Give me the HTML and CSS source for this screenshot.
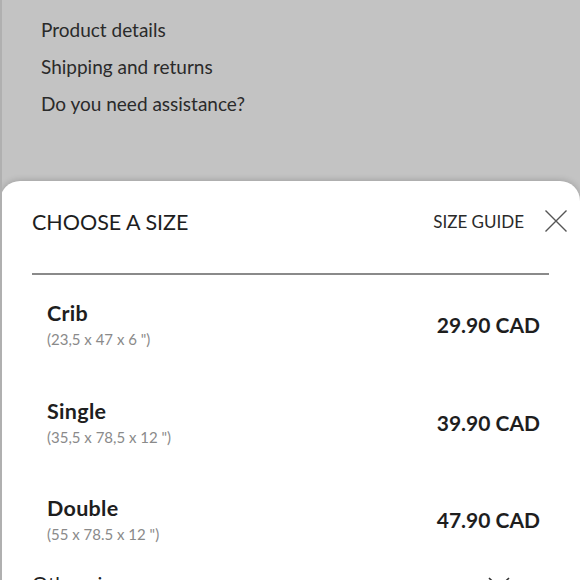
FILE: index.html
```html
<!DOCTYPE html>
<html>
<head>
<meta charset="utf-8">
<link rel="stylesheet" href="styles.css">
</head>
<body>
<div class="screen">
  <ul class="links">
    <li>Product details</li>
    <li>Shipping and returns</li>
    <li>Do you need assistance?</li>
  </ul>
  <section class="sheet">
    <header class="sheet-head">
      <h2 class="title">CHOOSE A SIZE</h2>
      <div class="head-actions">
        <span class="guide">SIZE GUIDE</span>
        <svg class="close" width="24" height="24" viewBox="0 0 24 24"><path d="M1.5 1.5 L22.5 22.5 M22.5 1.5 L1.5 22.5" stroke="#555" stroke-width="1.4" fill="none"/></svg>
      </div>
    </header>
    <div class="divider"></div>
    <ul class="sizes">
      <li class="size">
        <div class="size-info"><div class="name">Crib</div><div class="dims">(23,5 x 47 x 6 ")</div></div>
        <div class="price">29.90 CAD</div>
      </li>
      <li class="size">
        <div class="size-info"><div class="name">Single</div><div class="dims">(35,5 x 78,5 x 12 ")</div></div>
        <div class="price">39.90 CAD</div>
      </li>
      <li class="size">
        <div class="size-info"><div class="name">Double</div><div class="dims">(55 x 78.5 x 12 ")</div></div>
        <div class="price">47.90 CAD</div>
      </li>
    </ul>
    <div class="other">
      <span>Other sizes</span>
      <svg class="chev" width="22" height="12" viewBox="0 0 22 12"><path d="M1 1 L11 10.5 L21 1" stroke="#333" stroke-width="1.6" fill="none"/></svg>
    </div>
  </section>
</div>
</body>
</html>
```
FILE: styles.css
```css
* { box-sizing: border-box; }
html, body { margin: 0; padding: 0; }
body {
  font-family: Lato, "Noto Sans", sans-serif;
  color: #222;
  background: #c3c3c3;
}
.screen {
  width: 580px;
  height: 580px;
  overflow: hidden;
  background: #c3c3c3;
  border-left: 2px solid #b0b0b0;
}
.links {
  list-style: none;
  margin: 0;
  padding: 11px 0 0 39px;
  height: 181px;
  font-size: 19px;
  color: #2a2a2a;
}
.links li { line-height: 37px; }
.sheet {
  background: #fff;
  border-radius: 20px 20px 0 0;
  box-shadow: 0 -1px 6px rgba(0,0,0,0.18);
  margin-left: -2px;
  height: 420px;
}
.sheet-head {
  display: flex;
  justify-content: space-between;
  align-items: flex-start;
  padding: 28px 12px 0 32px;
  height: 82px;
}
.title {
  margin: 0;
  font-weight: 400;
  font-size: 21.5px;
  line-height: 26px;
  color: #1e1e1e;
}
.head-actions {
  display: flex;
  align-items: center;
  gap: 20px;
}
.guide {
  font-size: 17px;
  line-height: 26px;
  color: #2a2a2a;
}
.close { display: block; margin-top: -2px; }
.divider {
  margin: 10px 31px 0 32px;
  height: 2px;
  background: #8a8a8a;
}
.sizes {
  list-style: none;
  margin: 0;
  padding: 1px 40px 0 47px;
}
.size {
  display: flex;
  align-items: center;
  justify-content: space-between;
  height: 97.5px;
}
.name {
  font-weight: 700;
  font-size: 21.5px;
  letter-spacing: 0.3px;
  line-height: 26px;
  color: #1e1e1e;
}
.dims {
  margin-top: 3px;
  font-size: 15px;
  line-height: 20px;
  color: #8a8a8a;
}
.price {
  font-weight: 700;
  font-size: 21px;
  color: #1e1e1e;
}
.other {
  display: flex;
  justify-content: space-between;
  align-items: center;
  padding: 2px 70px 0 32px;
  font-size: 20px;
  color: #222;
}
.chev { display: block; }
```
